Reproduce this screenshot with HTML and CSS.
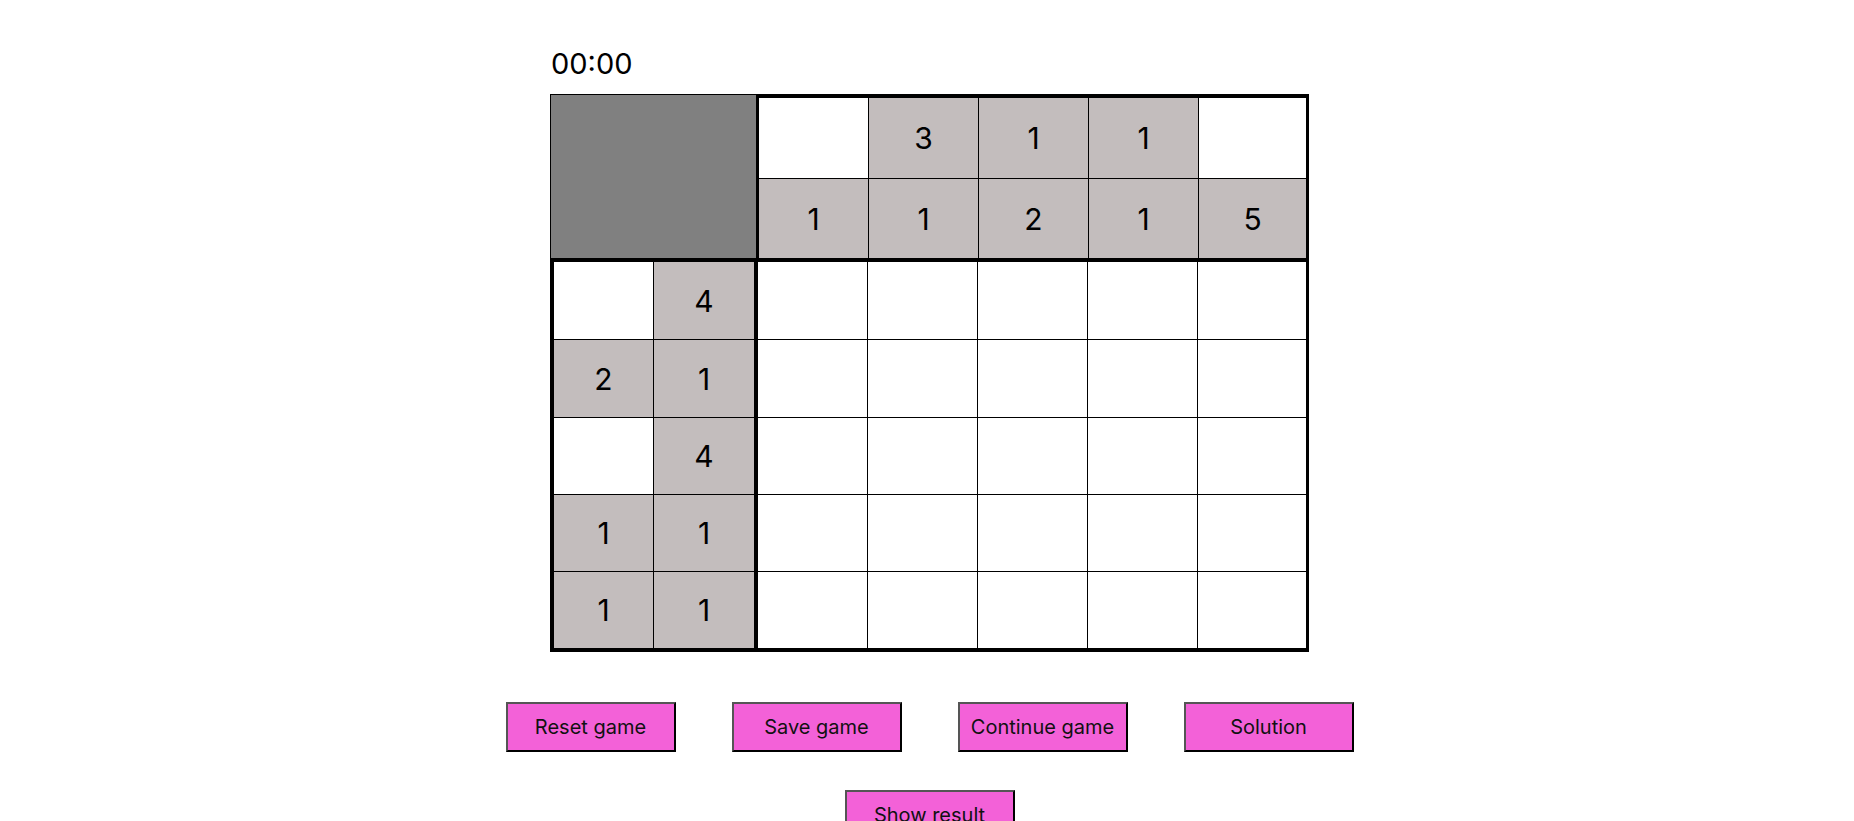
FILE: index.html
```html
<!DOCTYPE html>
<html lang="en">
<head>
<meta charset="utf-8">
<title>Nonogram</title>
<link rel="stylesheet" href="styles.css">
</head>
<body>
<div class="page">
  <div class="game">
    <div class="timer">00:00</div>
    <div class="board">
      <div class="board-top">
        <div class="corner"></div>
        <div class="col-clues">
          <div class="clue-row first">
            <div class="cell blank"></div>
            <div class="cell clue">3</div>
            <div class="cell clue">1</div>
            <div class="cell clue">1</div>
            <div class="cell blank last"></div>
          </div>
          <div class="clue-row second">
            <div class="cell clue">1</div>
            <div class="cell clue">1</div>
            <div class="cell clue">2</div>
            <div class="cell clue">1</div>
            <div class="cell clue last">5</div>
          </div>
        </div>
      </div>
      <div class="board-bottom">
        <div class="row r1">
          <div class="rc rc0 blank"></div><div class="rc rc1 clue">4</div>
          <div class="gc"></div><div class="gc"></div><div class="gc"></div><div class="gc"></div><div class="gc last"></div>
        </div>
        <div class="row r2">
          <div class="rc rc0 clue">2</div><div class="rc rc1 clue">1</div>
          <div class="gc"></div><div class="gc"></div><div class="gc"></div><div class="gc"></div><div class="gc last"></div>
        </div>
        <div class="row r3">
          <div class="rc rc0 blank"></div><div class="rc rc1 clue">4</div>
          <div class="gc"></div><div class="gc"></div><div class="gc"></div><div class="gc"></div><div class="gc last"></div>
        </div>
        <div class="row r4">
          <div class="rc rc0 clue">1</div><div class="rc rc1 clue">1</div>
          <div class="gc"></div><div class="gc"></div><div class="gc"></div><div class="gc"></div><div class="gc last"></div>
        </div>
        <div class="row r5">
          <div class="rc rc0 clue">1</div><div class="rc rc1 clue">1</div>
          <div class="gc"></div><div class="gc"></div><div class="gc"></div><div class="gc"></div><div class="gc last"></div>
        </div>
      </div>
    </div>
  </div>
  <div class="controls">
    <div class="btn-row">
      <button class="btn">Reset game</button>
      <button class="btn">Save game</button>
      <button class="btn">Continue game</button>
      <button class="btn">Solution</button>
    </div>
    <div class="btn-row">
      <button class="btn">Show result</button>
    </div>
  </div>
</div>
</body>
</html>
```

FILE: styles.css
```css
* { box-sizing: border-box; }
html, body {
  margin: 0;
  padding: 0;
  background: #ffffff;
  font-family: "Inter", "Noto Sans", sans-serif;
  color: #000;
}
.page {
  display: flex;
  flex-direction: column;
  align-items: center;
  padding-top: 46px;
  padding-left: 5px;
}
.game {
  display: flex;
  flex-direction: column;
  width: 759px;
}
.timer {
  font-size: 29px;
  line-height: 35px;
  height: 35px;
  margin-left: 1px;
  margin-bottom: 13px;
}
.board {
  display: flex;
  flex-direction: column;
  width: 759px;
}
.board-top {
  display: flex;
  height: 164px;
}
.corner {
  width: 206px;
  height: 164px;
  background: #808080;
  border-top: 1px solid #000;
  border-left: 1px solid #000;
}
.col-clues {
  width: 553px;
  border-top: 4px solid #000;
  border-left: 3px solid #000;
  border-right: 3px solid #000;
  display: flex;
  flex-direction: column;
}
.clue-row {
  display: flex;
}
.clue-row.first {
  height: 81px;
  border-bottom: 1px solid #000;
}
.clue-row.second {
  height: 79px;
}
.cell {
  width: 110px;
  border-right: 1px solid #000;
  display: flex;
  align-items: center;
  justify-content: center;
  font-size: 30px;
}
.cell.last {
  width: 107px;
  border-right: none;
}
.clue { background: #c3bdbd; }
.blank { background: #ffffff; }

.board-bottom {
  border-top: 4px solid #000;
  border-left: 4px solid #000;
  border-bottom: 4px solid #000;
  border-right: 3px solid #000;
  display: flex;
  flex-direction: column;
}
.row {
  display: flex;
  border-bottom: 1px solid #000;
}
.row.r1, .row.r2 { height: 78px; }
.row.r3, .row.r4 { height: 77px; }
.row.r5 { height: 76px; border-bottom: none; }
.rc, .gc {
  display: flex;
  align-items: center;
  justify-content: center;
  font-size: 30px;
}
.rc0 {
  width: 100px;
  border-right: 1px solid #000;
}
.rc1 {
  width: 104px;
  border-right: 4px solid #000;
}
.gc {
  width: 110px;
  border-right: 1px solid #000;
  background: #fff;
}
.gc.last {
  width: 108px;
  border-right: none;
}

.controls {
  display: flex;
  flex-direction: column;
  align-items: center;
  gap: 38px;
  margin-top: 50px;
}
.btn-row {
  display: flex;
  gap: 56px;
}
.btn {
  width: 170px;
  height: 50px;
  background: #f361d8;
  border: 2px solid #000;
  border-color: #555 #000 #000 #555;
  font-family: "Inter", "Noto Sans", sans-serif;
  font-size: 20px;
  color: #111;
  padding: 0;
  margin: 0;
}
```
